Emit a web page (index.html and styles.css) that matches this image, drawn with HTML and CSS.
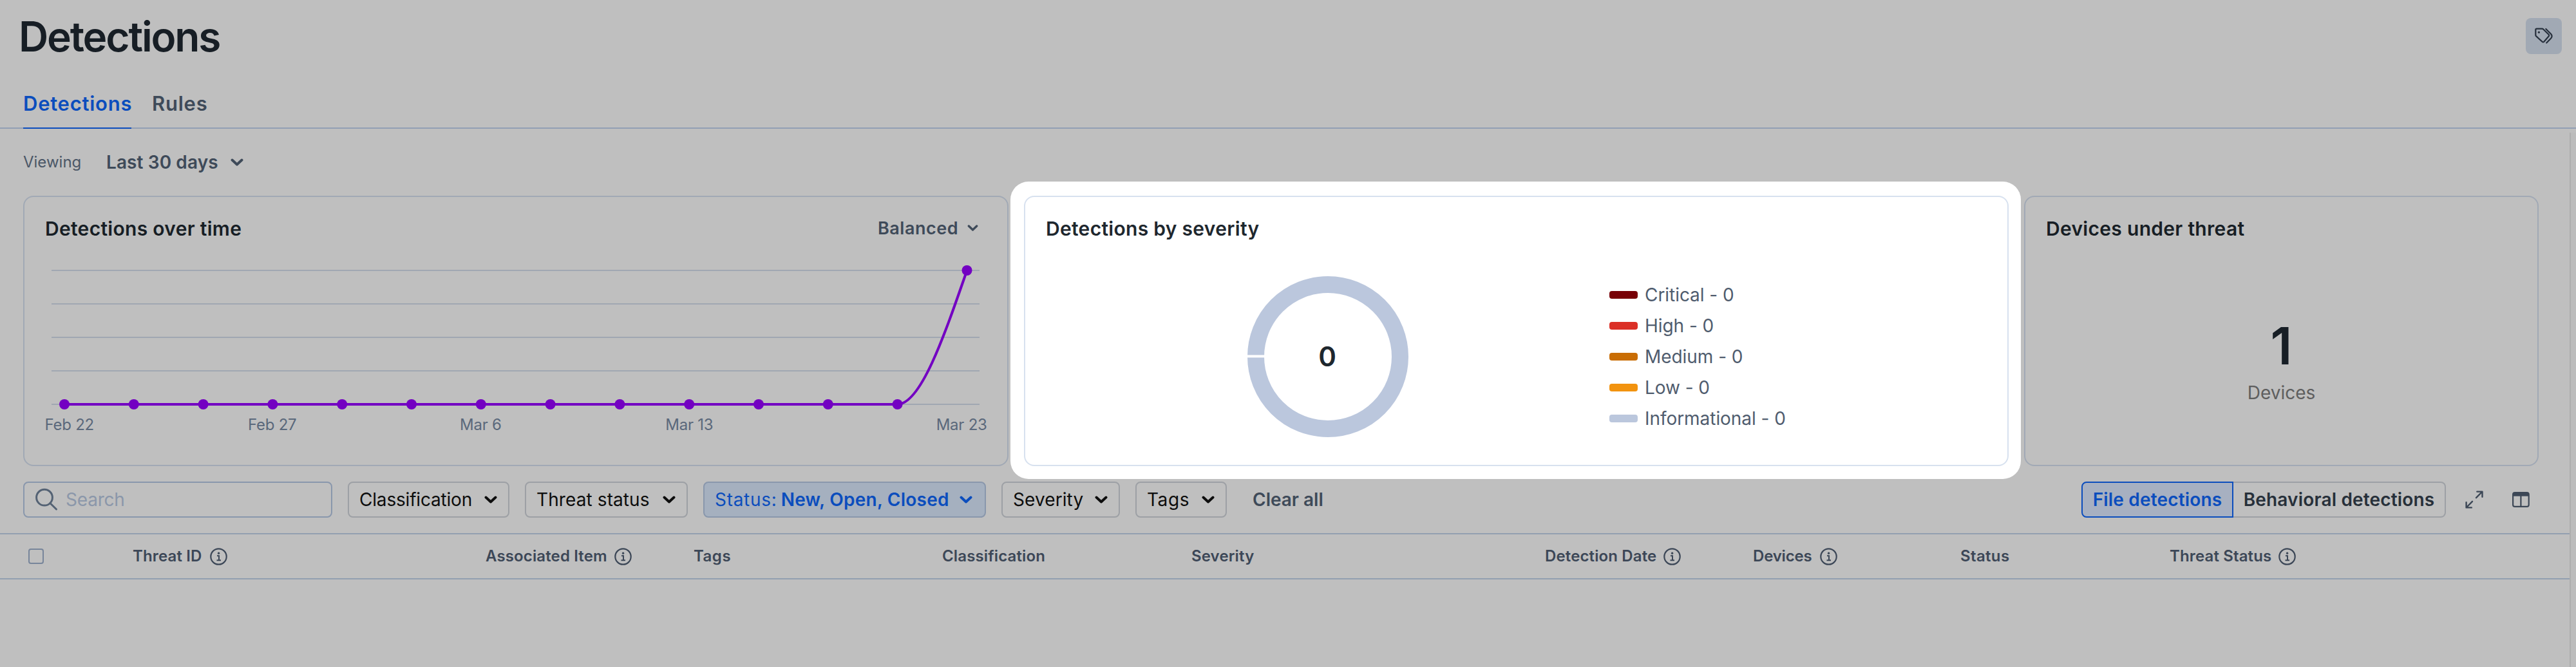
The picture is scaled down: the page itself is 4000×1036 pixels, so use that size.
FILE: index.html
```
<!DOCTYPE html>
<html lang="en">
<head>
<meta charset="utf-8">
<title>Detections</title>
<link rel="stylesheet" href="styles.css">
</head>
<body>
<svg class="defs" aria-hidden="true">
  <symbol id="chevron" viewBox="0 0 20 12"><path d="M2.5 2.5 10 9.5 17.5 2.5" fill="none" stroke="currentColor" stroke-width="4" stroke-linecap="round" stroke-linejoin="round"/></symbol>
  <symbol id="info" viewBox="0 0 27 27"><g fill="none" stroke="currentColor"><circle cx="13.5" cy="13.5" r="12.2" stroke-width="2.2"/><path d="M11 12.2h3v7M10.5 19.2h6.5" stroke-width="2"/></g><circle cx="13.6" cy="8.2" r="1.7" fill="currentColor"/></symbol>
</svg>

<header class="page-header">
  <h1 class="page-title">Detections</h1>
  <button class="tag-button" aria-label="Tags">
    <svg width="56" height="56" viewBox="0 0 56 56" fill="none" stroke="currentColor" stroke-width="2.2" stroke-linecap="round" stroke-linejoin="round"><path d="M17 16.7h8.4q1.1 0 1.9.8l8.2 8q1.3 1.5 0 3l-7.2 8.2q-1.3 1.4-2.8 0l-9.4-8.6q-.8-.8-.8-1.9v-7.8q0-1.7 1.7-1.7z"/><path d="M31.3 17l7.8 7.7q3 3.5 0 6.9l-6.8 7"/><circle cx="20.4" cy="22.2" r="1.6" fill="currentColor" stroke="none"/></svg>
  </button>
</header>

<nav class="tabs">
  <a class="tab tab-active">Detections</a>
  <a class="tab">Rules</a>
</nav>

<div class="page-body">
<main class="content">
  <div class="viewing">
    <span class="viewing-label">Viewing</span>
    <span class="viewing-value">Last 30 days</span>
    <svg class="chev"><use href="#chevron"/></svg>
  </div>

  <section class="cards">
    <article class="card">
      <div class="card-head">
        <h2 class="card-title">Detections over time</h2>
        <span class="mode">Balanced <svg class="chev-sm"><use href="#chevron"/></svg></span>
      </div>
      <svg class="chart" width="1526" height="318" viewBox="38 404 1526 318">
        <path class="grid-line" d="M80 420H1521M80 472H1521M80 524H1521M80 576H1521M80 628H1521"/>
        <path class="series" d="M100 628H1393.5C1429.5 628 1465.5 524 1501.5 420"/>
        <g class="points">
          <circle cx="100" cy="628" r="8"/><circle cx="207.8" cy="628" r="8"/><circle cx="315.6" cy="628" r="8"/><circle cx="423.4" cy="628" r="8"/><circle cx="531.2" cy="628" r="8"/><circle cx="639" cy="628" r="8"/><circle cx="746.8" cy="628" r="8"/><circle cx="854.6" cy="628" r="8"/><circle cx="962.4" cy="628" r="8"/><circle cx="1070.2" cy="628" r="8"/><circle cx="1178" cy="628" r="8"/><circle cx="1285.8" cy="628" r="8"/><circle cx="1393.6" cy="628" r="8"/><circle cx="1501.5" cy="420" r="8"/>
        </g>
        <g class="axis">
          <text x="69.5" y="668">Feb 22</text><text x="385" y="668">Feb 27</text><text x="714" y="668">Mar 6</text><text x="1033.3" y="668">Mar 13</text><text x="1453.7" y="668">Mar 23</text>
        </g>
      </svg>
    </article>

    <div class="spotlight">
      <article class="card card-lit">
        <div class="card-head"><h2 class="card-title">Detections by severity</h2></div>
        <div class="severity">
          <svg class="donut" width="250" height="250" viewBox="0 0 250 250">
            <circle cx="125" cy="125" r="112" fill="none" stroke="#bbc7dd" stroke-width="26"/>
            <path d="M0 124.4H27" stroke="#fff" stroke-width="4"/>
            <text x="124" y="139.5" text-anchor="middle">0</text>
          </svg>
          <ul class="legend">
            <li><i class="swatch critical"></i>Critical - 0</li>
            <li><i class="swatch high"></i>High - 0</li>
            <li><i class="swatch medium"></i>Medium - 0</li>
            <li><i class="swatch low"></i>Low - 0</li>
            <li><i class="swatch informational"></i>Informational - 0</li>
          </ul>
        </div>
      </article>
    </div>

    <article class="card">
      <div class="card-head"><h2 class="card-title">Devices under threat</h2></div>
      <div class="stat">
        <span class="stat-value">1</span>
        <span class="stat-label">Devices</span>
      </div>
    </article>
  </section>

  <div class="filters">
    <div class="search">
      <svg width="36" height="36" viewBox="0 0 36 36" fill="none" stroke="currentColor" stroke-width="3" stroke-linecap="round"><circle cx="15" cy="14.7" r="12.4"/><path d="M23.8 23.5 33.5 33"/></svg>
      <span>Search</span>
    </div>
    <div class="filter f-classification">Classification<svg class="chev"><use href="#chevron"/></svg></div>
    <div class="filter f-threat">Threat status<svg class="chev"><use href="#chevron"/></svg></div>
    <div class="filter filter-on"><span class="status-key">Status:</span><b>New, Open, Closed</b><svg class="chev"><use href="#chevron"/></svg></div>
    <div class="filter f-severity">Severity<svg class="chev"><use href="#chevron"/></svg></div>
    <div class="filter f-tags">Tags<svg class="chev"><use href="#chevron"/></svg></div>
    <span class="clear">Clear all</span>
    <div class="segmented">
      <span class="segment segment-on">File detections</span>
      <span class="segment">Behavioral detections</span>
    </div>
    <svg class="tool" width="28" height="28" viewBox="0 0 28 28" fill="none" stroke="currentColor" stroke-width="2.4" stroke-linecap="round" stroke-linejoin="round"><path d="M17 11.2 26 2M18.3 1.6h8.2v8.2M11 16.8 2 26M1.6 18.2v8.2h8.2"/></svg>
    <svg class="tool tool-columns" width="28" height="28" viewBox="0 0 28 28" fill="none" stroke="currentColor" stroke-width="2.2"><rect x="2.1" y="3.1" width="24.6" height="21.8" rx="3"/><path d="M2 6h24.6M14.4 8v17"/><path d="M2.5 6.2h23.8" stroke-width="5"/></svg>
  </div>

  <div class="table-head">
    <span class="cell cell-check"><i class="checkbox"></i></span>
    <span class="cell">Threat ID<svg class="info"><use href="#info"/></svg></span>
    <span class="cell">Associated Item<svg class="info info-near"><use href="#info"/></svg></span>
    <span class="cell cell-tags">Tags</span>
    <span class="cell">Classification</span>
    <span class="cell">Severity</span>
    <span class="cell">Detection Date<svg class="info info-near"><use href="#info"/></svg></span>
    <span class="cell cell-devices">Devices<svg class="info"><use href="#info"/></svg></span>
    <span class="cell cell-status">Status</span>
    <span class="cell">Threat Status<svg class="info info-near"><use href="#info"/></svg></span>
  </div>
</main>
<div class="gutter"></div>
</div>
</body>
</html>
```
FILE: styles.css
```
* { box-sizing: border-box; }
body {
  margin: 0;
  width: 4000px;
  height: 1036px;
  overflow: hidden;
  display: flex;
  flex-direction: column;
  background: #bfbfbf;
  color: #171e25;
  font: 400 28px/1 Inter, "Liberation Sans", sans-serif;
}
svg { display: block; flex: none; }
.defs { position: absolute; width: 0; height: 0; }
h1, h2, ul { margin: 0; padding: 0; list-style: none; }

.page-header {
  height: 114px;
  padding: 0 22px 0 29px;
  display: flex;
  align-items: center;
  justify-content: space-between;
}
.page-title { font-size: 64px; font-weight: 600; letter-spacing: -2.14px; }
.tag-button {
  width: 56px;
  height: 56px;
  margin-bottom: 2px;
  padding: 0;
  border: 0;
  border-radius: 8px;
  background: #a1a9b4;
  color: #27303c;
}

.tabs {
  height: 86px;
  padding-left: 36px;
  display: flex;
  align-items: flex-end;
  gap: 32px;
  box-shadow: inset 0 -2px #929fb4;
  font-size: 31px;
  font-weight: 600;
  letter-spacing: .75px;
  color: #3e4a59;
}
.tab { height: 80px; line-height: 81px; }
.tab-active { width: 168px; color: #0b4dbd; box-shadow: inset 0 -2px #0b4dbd; }

.page-body { flex: 1; display: flex; }
.content { width: 3990px; display: flex; flex-direction: column; }
.gutter { flex: 1; margin-top: 6px; background: #bcbcbc; border-left: 2px solid #aeaeae; }

.viewing {
  height: 104px;
  padding-left: 36px;
  display: flex;
  align-items: center;
  color: #3e4a59;
}
.viewing-label { width: 129px; font-size: 24px; color: #4b5767; }
.viewing-value { width: 193px; font-weight: 600; letter-spacing: .1px; }
.chev { width: 20px; height: 12px; }
.chev-sm { width: 17px; height: 10px; margin-bottom: 0; }

.cards {
  display: grid;
  grid-template-columns: 1530px 1529px 799px;
  gap: 24px;
  height: 420px;
  padding-left: 36px;
}
.card {
  height: 420px;
  border: 2px solid #a1a9b5;
  border-radius: 16px;
}
.card-lit { border-color: #d7e1ef; color: #1e272e; }
.spotlight {
  margin: -22px -19px -20px -21px;
  padding: 22px 19px 20px 21px;
  border-radius: 28px;
  background: #fff;
}
.card-head {
  height: 98px;
  padding: 0 45px 0 32px;
  display: flex;
  align-items: center;
  justify-content: space-between;
}
.card-title { font-size: 30px; font-weight: 600; letter-spacing: .3px; }
.mode {
  display: flex;
  align-items: center;
  gap: 14px;
  margin-bottom: 2px;
  font-size: 27px;
  font-weight: 600;
  letter-spacing: .5px;
  color: #3e4a59;
}
.grid-line { stroke: #a0a7b2; stroke-width: 2; }
.series { fill: none; stroke: #7300c2; stroke-width: 4; }
.points { fill: #7300c2; }
.axis { fill: #5a687b; font-size: 24px; letter-spacing: -.25px; }

.severity {
  height: 299px;
  padding-left: 345px;
  display: flex;
  align-items: center;
  gap: 312px;
}
.donut { fill: #1e272e; font-size: 42px; font-weight: 600; }
.legend { color: #4f5c6e; }
.legend li { height: 48px; display: flex; align-items: center; gap: 11px; letter-spacing: -.05px; }
.swatch { width: 44px; height: 12px; border-radius: 4px; }
.critical { background: #780006; }
.high { background: #db2f26; }
.medium { background: #c96d04; }
.low { background: #f2930f; }
.informational { background: #bbc7dd; }

.stat { padding-top: 93px; display: flex; flex-direction: column; align-items: center; gap: 19px; }
.stat-value { font-size: 80px; font-weight: 600; }
.stat-label { color: #5e5e5e; }

.filters {
  height: 56px;
  margin: 24px 0;
  padding-left: 36px;
  display: flex;
  align-items: center;
  gap: 24px;
}
.search {
  width: 480px;
  height: 56px;
  padding-left: 16px;
  display: flex;
  align-items: center;
  gap: 12px;
  border: 2px solid #8997ac;
  border-radius: 8px;
  color: #546274;
}
.search span { color: #8b97aa; letter-spacing: -.2px; }
.filter {
  height: 56px;
  padding: 0 17px 0 16px;
  display: flex;
  align-items: center;
  justify-content: space-between;
  border: 2px solid #9da0a5;
  border-radius: 8px;
  color: #0d0d0d;
}
.f-classification { width: 251px; letter-spacing: -.19px; }
.f-threat { width: 253px; letter-spacing: .1px; }
.f-severity { width: 184px; letter-spacing: .1px; }
.f-tags { width: 142px; letter-spacing: .6px; }
.filter-on { width: 439px; padding-right: 19px; background: #a5b0bf; border-color: #8997ac; color: #0b4dbd; }
.filter-on b { margin-right: 10px; font-weight: 600; letter-spacing: .25px; }
.status-key { letter-spacing: .7px; }
.clear { margin-left: 16px; font-weight: 600; color: #3e4a59; }
.segmented { width: 566px; height: 56px; margin-left: auto; display: flex; font-weight: 600; letter-spacing: .17px; }
.segment {
  flex: 1;
  display: flex;
  align-items: center;
  justify-content: center;
  border: 2px solid #9da0a5;
  border-left: 0;
  border-radius: 0 8px 8px 0;
  color: #27303a;
}
.segment-on {
  flex: 0 0 236px;
  border: 2px solid #0b4dbd;
  border-radius: 8px 0 0 8px;
  background: #a7b0c1;
  color: #0b4dbd;
}
.tool { margin-left: 6px; color: #3c4756; }
.tool-columns { margin: 0 62px 0 20px; }

.table-head {
  height: 72px;
  display: grid;
  grid-template-columns: 206px 548px 323px 386px 387px 549px 323px 322px 325px 1fr;
  border: 2px solid #929fb0;
  border-width: 2px 0;
  font-size: 24px;
  font-weight: 600;
  letter-spacing: .13px;
  color: #3c4757;
}
.cell { display: flex; align-items: center; }
.cell-check { padding-left: 44px; }
.cell-tags { letter-spacing: .5px; }
.cell-devices { letter-spacing: -.2px; }
.cell-status { letter-spacing: .35px; }
.checkbox { width: 24px; height: 24px; border: 2px solid #77859a; border-radius: 4px; }
.info { width: 27px; height: 27px; margin-left: 13px; }
.info-near { margin-left: 11px; }
```
